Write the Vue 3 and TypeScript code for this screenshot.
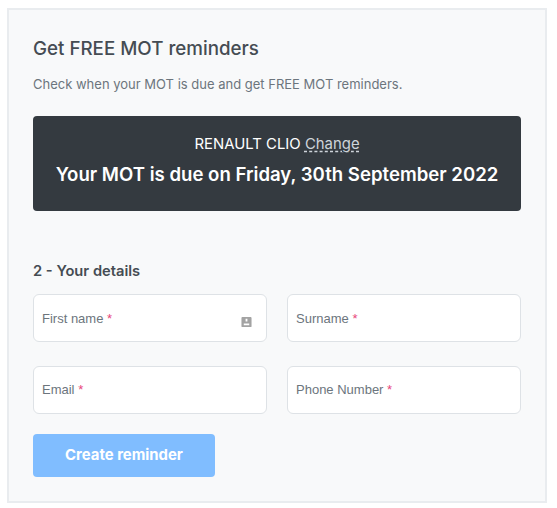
<script setup lang="ts">
const fields = [
  { label: 'First name', icon: true },
  { label: 'Surname', icon: false },
  { label: 'Email', icon: false },
  { label: 'Phone Number', icon: false },
]
</script>

<template>
  <main class="page">
    <section class="card">
      <h1 class="title">Get FREE MOT reminders</h1>
      <p class="lead">Check when your MOT is due and get FREE MOT reminders.</p>
      <div class="banner">
        <div class="car">RENAULT CLIO <a class="change">Change</a></div>
        <div class="due">Your MOT is due on Friday, 30th September 2022</div>
      </div>
      <h2 class="step">2 - Your details</h2>
      <div class="grid">
        <div v-for="f in fields" :key="f.label" class="field">
          <span class="label">{{ f.label }} <span class="req">*</span></span>
          <svg v-if="f.icon" class="icon" viewBox="0 0 12 12" width="11" height="12">
            <path fill-rule="evenodd" fill="#a3a3a3" d="M1.5 0.5h9a1 1 0 0 1 1 1v9a1 1 0 0 1-1 1h-9a1 1 0 0 1-1-1v-9a1 1 0 0 1 1-1zM5 2.5v3h2v-3zM3 7.5v2h6v-2z" />
          </svg>
        </div>
      </div>
      <button class="submit" type="button">Create reminder</button>
    </section>
  </main>
</template>

<style>
html, body { margin: 0; background: #fff; }
</style>

<style scoped>
.page {
  width: 557px;
  height: 508px;
  padding: 8px 10px 5px 7px;
  box-sizing: border-box;
  font-family: Inter, "Liberation Sans", sans-serif;
}
.card {
  box-sizing: border-box;
  height: 495px;
  border: 2px solid #e9ecef;
  background: #f8f9fa;
  padding: 24px 24px 0;
}
.title {
  margin: 0;
  font-size: 18.75px;
  line-height: 30px;
  font-weight: 500;
  color: #454c53;
}
.lead {
  margin: 10px 0 0;
  font-size: 13px;
  line-height: 20px;
  color: #6c757d;
}
.banner {
  margin-top: 22px;
  height: 95px;
  box-sizing: border-box;
  padding-top: 17px;
  border-radius: 4px;
  background: #343a40;
  color: #fff;
  text-align: center;
}
.car {
  font-size: 14.9px;
  line-height: 22px;
}
.change {
  color: #ced4da;
  text-decoration: underline dashed;
  text-underline-offset: 2px;
}
.due {
  margin-top: 5px;
  font-size: 18.6px;
  line-height: 28px;
  font-weight: 600;
}
.step {
  margin: 50px 0 0;
  font-size: 14.7px;
  line-height: 20px;
  font-weight: 600;
  color: #454c53;
}
.grid {
  margin-top: 13px;
  display: grid;
  grid-template-columns: 234px 234px;
  column-gap: 20px;
  row-gap: 24px;
}
.field {
  position: relative;
  box-sizing: border-box;
  height: 48px;
  border: 1px solid #dee2e6;
  border-radius: 6px;
  background: #fff;
  padding: 15px 8px 0;
}
.field:nth-child(n + 3) {
  padding-top: 14px;
}
.label {
  display: block;
  font-family: "Liberation Sans", Arial, sans-serif;
  font-size: 13px;
  line-height: 17px;
  color: #6c757d;
}
.req { color: #e8467c; }
.icon {
  position: absolute;
  right: 14px;
  top: 21px;
}
.submit {
  display: block;
  margin-top: 20px;
  width: 182px;
  height: 43px;
  padding: 0 0 2px;
  border: 0;
  border-radius: 4px;
  background: #80bdff;
  color: #fff;
  font-family: inherit;
  font-size: 14.9px;
  font-weight: 700;
}
</style>
